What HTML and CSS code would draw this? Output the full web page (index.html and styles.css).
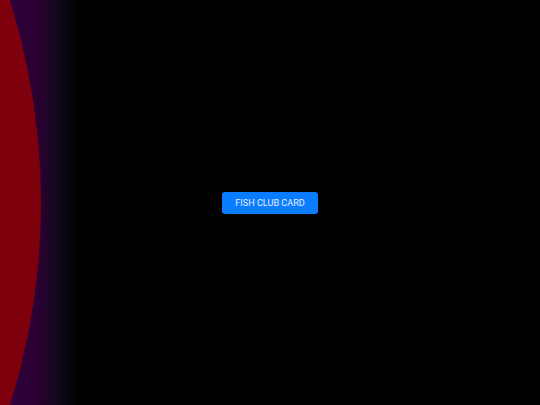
FILE: index.html
```html
<!DOCTYPE html>
<html>
<head>
<meta charset="utf-8">
<link rel="stylesheet" href="styles.css">
</head>
<body>
<div class="stage">
  <div class="orb"></div>
  <button class="card-btn">FISH CLUB CARD</button>
</div>
</body>
</html>
```
FILE: styles.css
```css
html, body {
  margin: 0;
  padding: 0;
  width: 540px;
  height: 405px;
  overflow: hidden;
  background: #000;
}
.stage {
  position: relative;
  width: 540px;
  height: 405px;
  display: flex;
  align-items: center;
  justify-content: center;
  background: linear-gradient(to right, #340040 0px, #280030 40px, #14081f 55px, #070410 67px, #000 80px);
  overflow: hidden;
}
.orb {
  position: absolute;
  left: -1313px;
  top: -474.5px;
  width: 1354px;
  height: 1354px;
  border-radius: 50%;
  background: #7d000c;
}
.card-btn {
  position: relative;
  width: 96px;
  height: 22px;
  padding: 0;
  border: none;
  border-radius: 3px;
  background: #0a7cff;
  color: #e8efff;
  font-family: Roboto, "Liberation Sans", Arial, sans-serif;
  font-size: 9.1px;
  line-height: 22px;
  text-align: center;
  cursor: pointer;
}
```
